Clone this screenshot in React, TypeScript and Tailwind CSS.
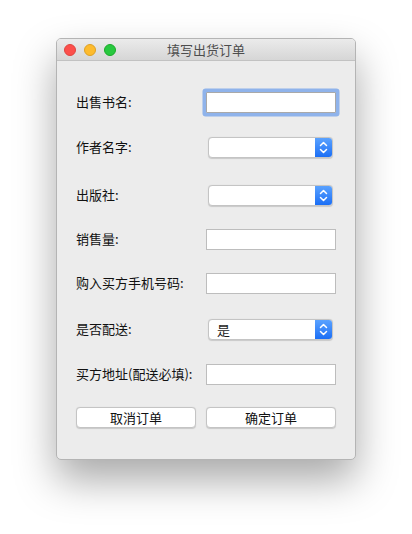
import React from 'react';

const font = { fontFamily: '"Noto Sans CJK SC", "Noto Sans", sans-serif' };

const TextField = ({ focused = false }: { focused?: boolean }) => (
  <div className={`w-[130px] h-[21px] bg-white border ${focused ? 'border-[#a9a9a9] shadow-[0_0_0_3.5px_rgba(120,165,235,0.8)] rounded-[1px]' : 'border-[#bdbdbd]'}`} />
);

const Select = ({ value }: { value?: string }) => (
  <div className="w-[125px] h-[21px] ml-[2px] flex bg-white rounded-[4px] border border-[#c4c4c4] shadow-[0_0.5px_1px_rgba(0,0,0,0.15)] overflow-hidden">
    <div className="flex-1 text-[13px] leading-[19px] pl-[8px] text-[#1a1a1a]">{value}</div>
    <div className="w-[17px] h-full bg-gradient-to-b from-[#5aa2ff] to-[#1a6ef5] flex items-center justify-center">
      <svg width="9" height="13" viewBox="0 0 9 13" fill="none" stroke="white" strokeWidth="1.5" strokeLinecap="round" strokeLinejoin="round">
        <path d="M1.5 4.5 L4.5 1.5 L7.5 4.5" />
        <path d="M1.5 8.5 L4.5 11.5 L7.5 8.5" />
      </svg>
    </div>
  </div>
);

const Row = ({ label, children, className = '' }: { label: string; children: React.ReactNode; className?: string }) => (
  <div className={`flex items-center h-[24px] ${className}`}>
    <div className="w-[130px] text-[13px] text-[#111]">{label}</div>
    {children}
  </div>
);

export default function App() {
  return (
    <div className="w-[412px] h-[534px] bg-white pl-[56px] pt-[38px]" style={font}>
      <div className="w-[300px] h-[422px] bg-[#ececec] rounded-[5px] border border-[#b4b4b4] shadow-[0_20px_40px_rgba(0,0,0,0.34)] overflow-hidden flex flex-col">
        {/* Title bar */}
        <div className="h-[22px] flex items-center bg-gradient-to-b from-[#ebebeb] to-[#d6d6d6] border-b border-[#c2c2c2] relative">
          <div className="flex gap-[8px] pl-[7px]">
            <span className="w-[12px] h-[12px] rounded-full bg-[#fc4f4b] border border-[#e0443e]" />
            <span className="w-[12px] h-[12px] rounded-full bg-[#fdbb2d] border border-[#dea123]" />
            <span className="w-[12px] h-[12px] rounded-full bg-[#28c83f] border border-[#1aab29]" />
          </div>
          <div className="absolute inset-0 flex items-center justify-center text-[13px] text-[#4d4d4d]">填写出货订单</div>
        </div>

        {/* Form */}
        <div className="flex flex-col pl-[19px] pt-[29px]">
          <Row label="出售书名:">
            <TextField focused />
          </Row>
          <Row label="作者名字:" className="mt-[21px]">
            <Select />
          </Row>
          <Row label="出版社:" className="mt-[24px]">
            <Select />
          </Row>
          <Row label="销售量:" className="mt-[20px]">
            <TextField />
          </Row>
          <Row label="购入买方手机号码:" className="mt-[20px]">
            <TextField />
          </Row>
          <Row label="是否配送:" className="mt-[22px]">
            <Select value="是" />
          </Row>
          <Row label="买方地址(配送必填):" className="mt-[21px]">
            <TextField />
          </Row>
          <div className="flex gap-[10px] mt-[19px] h-[24px] items-center">
            <button className="w-[120px] h-[21px] bg-white rounded-[4px] border border-[#c4c4c4] shadow-[0_0.5px_1px_rgba(0,0,0,0.15)] text-[13px] leading-[19px] text-[#111]">取消订单</button>
            <button className="w-[130px] h-[21px] bg-white rounded-[4px] border border-[#c4c4c4] shadow-[0_0.5px_1px_rgba(0,0,0,0.15)] text-[13px] leading-[19px] text-[#111]">确定订单</button>
          </div>
        </div>
      </div>
    </div>
  );
}
